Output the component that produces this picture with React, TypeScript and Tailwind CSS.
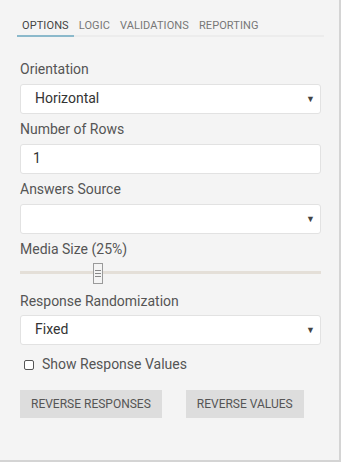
const tabs = ["Options", "Logic", "Validations", "Reporting"];

const Label = ({ children }: { children: React.ReactNode }) => (
  <div className="text-[14px] leading-[18px] text-[#555] mb-[6px]">{children}</div>
);

const SelectBox = ({ value }: { value: string }) => (
  <div className="relative h-[30px] bg-white border border-[#e2e2e2] rounded-[3px] flex items-center pl-[14px] text-[14px] text-[#333]">
    {value}
    <span className="absolute right-[5px] top-[10px] text-[9px] leading-none text-[#444]">▼</span>
  </div>
);

export default function App() {
  return (
    <div className="w-[343px] h-[464px] bg-white" style={{ fontFamily: "Roboto, sans-serif" }}>
      <div className="w-[341px] h-[462px] bg-[#f4f4f4] border-r-2 border-b-2 border-[#d4d4d4] pt-[18px] pl-[20px] pr-[18px]">
        <div className="flex -ml-[3px] mr-[-3px] border-b-2 border-[#ececec] mb-[23px]">
          {tabs.map((t, i) => (
            <div
              key={t}
              className={`px-[5px] -mb-[2px] text-[11px] uppercase tracking-[0.1px] ${
                i === 0 ? "text-[#444] border-b-2 border-[#8bb9cb]" : "text-[#777]"
              }`}
            >
              {t}
            </div>
          ))}
        </div>

        <Label>Orientation</Label>
        <SelectBox value="Horizontal" />

        <div className="mt-[6px]" />
        <Label>Number of Rows</Label>
        <div className="h-[30px] bg-white border border-[#e2e2e2] rounded-[3px] flex items-center pl-[12px] text-[14px] text-[#333]">
          1
        </div>

        <div className="mt-[6px]" />
        <Label>Answers Source</Label>
        <SelectBox value="" />

        <div className="mt-[6px]" />
        <div className="text-[14px] leading-[18px] text-[#555] mb-[4px]">Media Size (25%)</div>
        <div className="relative h-[22px] flex items-center">
          <div className="w-full h-[3px] bg-[#e4dfd8]" />
          <div className="absolute left-[73px] top-[1px] w-[10px] h-[21px] border border-[#9a9a9a] bg-[#f4f4f4] flex flex-col items-center justify-center gap-[2px]">
            <div className="w-[6px] h-px bg-[#888]" />
            <div className="w-[6px] h-px bg-[#888]" />
            <div className="w-[6px] h-px bg-[#888]" />
          </div>
        </div>

        <div className="mt-[8px]" />
        <Label>Response Randomization</Label>
        <div className="-mt-[1px]" />
        <SelectBox value="Fixed" />

        <label className="flex items-center gap-[8px] mt-[11px] ml-[4px] h-[18px] text-[14px] text-[#555]">
          <span className="w-[10px] h-[10px] border border-[#555] rounded-[2px] bg-white" />
          Show Response Values
        </label>

        <div className="flex gap-[24px] mt-[16px]">
          <button className="h-[28px] px-[11px] bg-[#dddddd] text-[12px] uppercase text-[#555]">
            Reverse Responses
          </button>
          <button className="h-[28px] px-[11px] bg-[#dddddd] text-[12px] uppercase text-[#555]">
            Reverse Values
          </button>
        </div>
      </div>
    </div>
  );
}
